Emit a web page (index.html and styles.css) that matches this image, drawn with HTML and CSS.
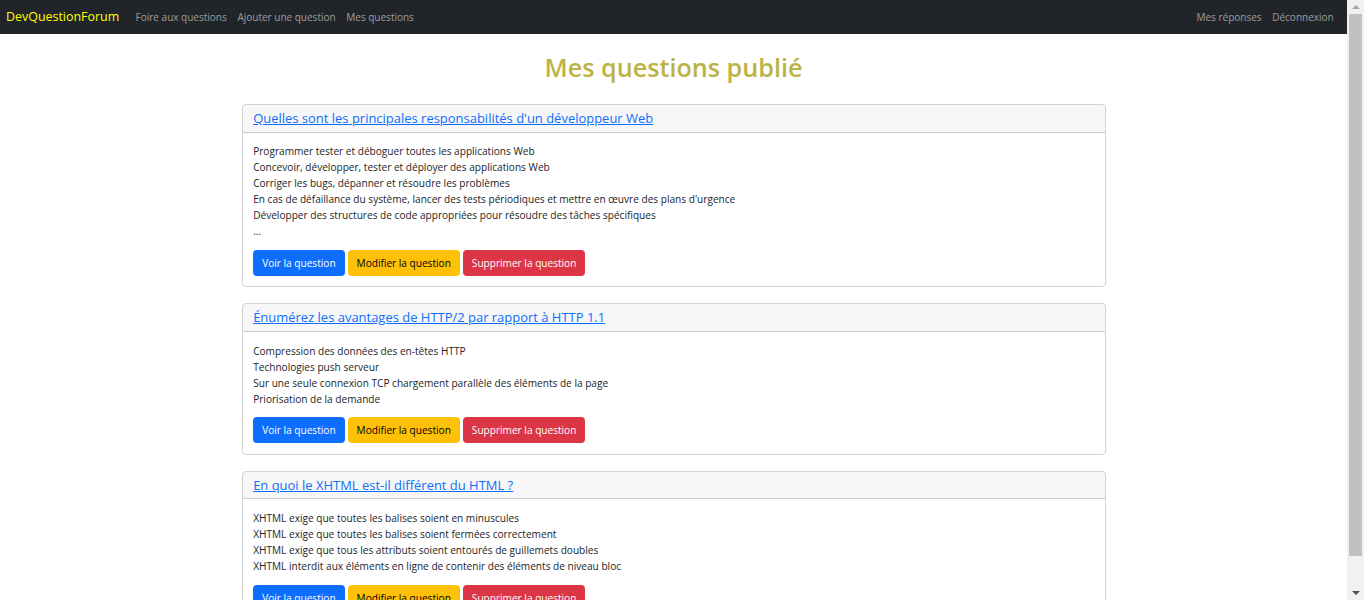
FILE: index.html
```html
<!DOCTYPE html>
<html lang="fr">
<head>
<meta charset="utf-8">
<title>Mes questions</title>
<link rel="stylesheet" href="styles.css">
</head>
<body>
<nav class="navbar">
  <div class="nav-left">
    <a class="brand" href="#">DevQuestionForum</a>
    <a class="nav-link" href="#">Foire aux questions</a>
    <a class="nav-link" href="#">Ajouter une question</a>
    <a class="nav-link" href="#">Mes questions</a>
  </div>
  <div class="nav-right">
    <a class="nav-link" href="#">Mes réponses</a>
    <a class="nav-link" href="#">Déconnexion</a>
  </div>
</nav>
<main class="container">
  <h1 class="page-title">Mes questions publié</h1>

  <section class="card">
    <div class="card-header"><a href="#" class="q-title">Quelles sont les principales responsabilités d'un développeur Web</a></div>
    <div class="card-body">
      <p class="q-text">Programmer tester et déboguer toutes les applications Web<br>Concevoir, développer, tester et déployer des applications Web<br>Corriger les bugs, dépanner et résoudre les problèmes<br>En cas de défaillance du système, lancer des tests périodiques et mettre en œuvre des plans d'urgence<br>Développer des structures de code appropriées pour résoudre des tâches spécifiques<br>...</p>
      <div class="actions">
        <a href="#" class="btn btn-primary">Voir la question</a>
        <a href="#" class="btn btn-warning">Modifier la question</a>
        <a href="#" class="btn btn-danger">Supprimer la question</a>
      </div>
    </div>
  </section>

  <section class="card">
    <div class="card-header"><a href="#" class="q-title">Énumérez les avantages de HTTP/2 par rapport à HTTP 1.1</a></div>
    <div class="card-body">
      <p class="q-text">Compression des données des en-têtes HTTP<br>Technologies push serveur<br>Sur une seule connexion TCP chargement parallèle des éléments de la page<br>Priorisation de la demande</p>
      <div class="actions">
        <a href="#" class="btn btn-primary">Voir la question</a>
        <a href="#" class="btn btn-warning">Modifier la question</a>
        <a href="#" class="btn btn-danger">Supprimer la question</a>
      </div>
    </div>
  </section>

  <section class="card">
    <div class="card-header"><a href="#" class="q-title">En quoi le XHTML est-il différent du HTML ?</a></div>
    <div class="card-body">
      <p class="q-text">XHTML exige que toutes les balises soient en minuscules<br>XHTML exige que toutes les balises soient fermées correctement<br>XHTML exige que tous les attributs soient entourés de guillemets doubles<br>XHTML interdit aux éléments en ligne de contenir des éléments de niveau bloc</p>
      <div class="actions">
        <a href="#" class="btn btn-primary">Voir la question</a>
        <a href="#" class="btn btn-warning">Modifier la question</a>
        <a href="#" class="btn btn-danger">Supprimer la question</a>
      </div>
    </div>
  </section>
</main>

<div class="scrollbar" aria-hidden="true">
  <div class="sb-btn"><span class="arrow-up"></span></div>
  <div class="sb-thumb"></div>
  <div class="sb-space"></div>
  <div class="sb-btn"><span class="arrow-down"></span></div>
</div>
</body>
</html>
```

FILE: styles.css
```css
* { box-sizing: border-box; }
html, body { margin: 0; }
body {
  margin-right: 17px;
  font-family: "Open Sans", "Noto Sans", sans-serif;
  font-size: 10.1px;
  line-height: 16px;
  color: #212529;
  background: #fff;
}
a { text-decoration: none; }

/* imitation of the browser's classic scrollbar, laid over the right edge */
.scrollbar {
  position: fixed;
  top: 0;
  right: 0;
  width: 17px;
  height: 100vh;
  background: #f1f1f1;
  display: flex;
  flex-direction: column;
  align-items: center;
}
.sb-btn {
  height: 14px;
  width: 100%;
  display: flex;
  align-items: center;
  justify-content: center;
  flex: none;
}
.arrow-up {
  width: 0;
  height: 0;
  border-left: 4px solid transparent;
  border-right: 4px solid transparent;
  border-bottom: 4px solid #a3a3a3;
}
.arrow-down {
  width: 0;
  height: 0;
  border-left: 4px solid transparent;
  border-right: 4px solid transparent;
  border-top: 4px solid #505050;
}
.sb-thumb {
  width: 13px;
  height: 542px;
  background: #c1c1c1;
  flex: none;
}
.sb-space { flex: 1; }

.navbar {
  height: 34px;
  background: #212529;
  display: flex;
  align-items: center;
  justify-content: space-between;
  padding: 0 8px 0 6px;
}
.nav-left, .nav-right { display: flex; align-items: center; }
.brand {
  color: #ffff00;
  font-size: 12.45px;
  margin-right: 11px;
}
.nav-link {
  color: rgba(255, 255, 255, 0.55);
  font-size: 10px;
  padding: 0 5.33px;
}

.container {
  max-width: 880px;
  margin: 0 auto;
  padding: 0 8px 9px;
}
.page-title {
  margin: 17px 0 21px;
  text-align: center;
  font-size: 25.2px;
  line-height: 32px;
  font-weight: 600;
  color: #bcb245;
}

.card {
  border: 1px solid rgba(0, 0, 0, 0.176);
  border-radius: 4px;
  overflow: hidden;
}
.card + .card { margin-top: 16px; }
.card-header {
  background: rgba(0, 0, 0, 0.03);
  border-bottom: 1px solid rgba(0, 0, 0, 0.176);
  padding: 5px 10.67px 5.5px;
  font-size: 12.97px;
  line-height: 16px;
}
.q-title {
  color: #0d6efd;
  text-decoration: underline;
}
.card-body { padding: 10.67px; }
.q-text { margin: 0 0 10.67px; }

.actions { display: flex; gap: 3px; }
.btn {
  display: inline-block;
  padding: 5px 9px;
  border-radius: 4px;
  line-height: 16px;
}
.btn-primary { background: #0d6efd; color: #fff; }
.btn-warning { background: #ffc107; color: #000; }
.btn-danger { background: #dc3545; color: #fff; }
```
